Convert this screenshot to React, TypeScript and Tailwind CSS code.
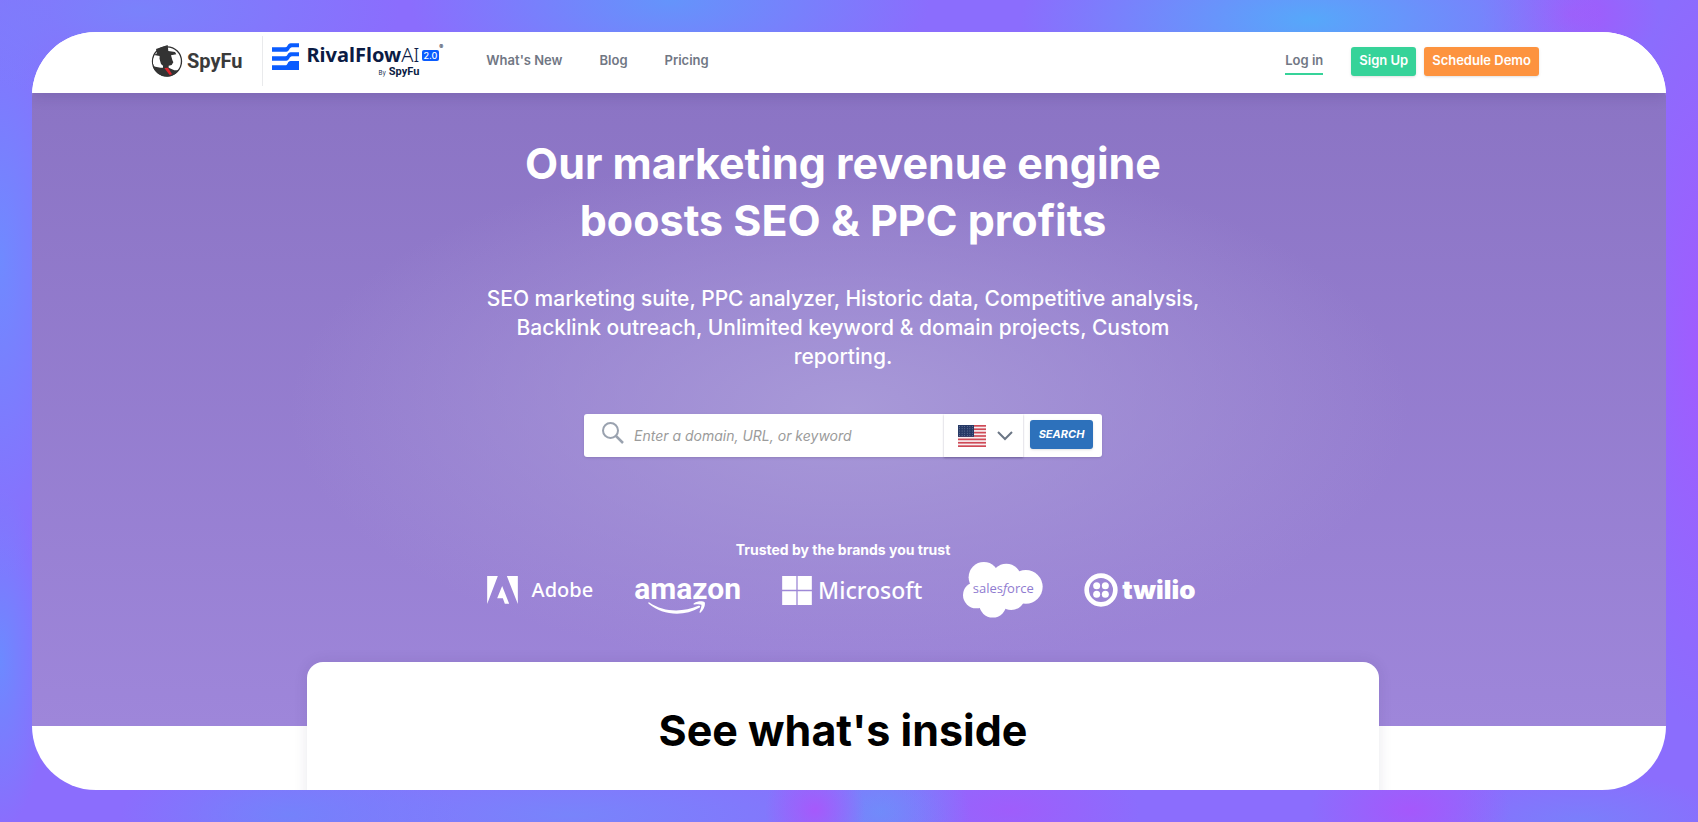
import React from "react";

function SpyFuMark() {
  return (
    <svg viewBox="0 0 96 96" className="size-8" aria-hidden="true">
      <circle cx="48" cy="49" r="43.500" fill="#fff" stroke="#333" strokeWidth="4" />
      <path
        fill="#333"
        d="M15 12 50 0 52 18 72 21 76 28 60 31 64 45 67 52 62 60 53 62 53 68 70 76 84 76C74 90 61 96 48 95 27 95 9 80 5 62 16 66 26 68 36 68L36 62 30 57 25 40 26 33 9 30 18 25Z"
      />
      <path fill="#fff" d="M12 34 25 36 24 48 29 60 35 64 35 66 22 63C14 60 8 58 6 56 5 47 8 40 12 34Z" />
      <path fill="#d9232b" d="M40 69 51 68 63 88 56 90Z" />
    </svg>
  );
}

function RivalFlowMark() {
  return (
    <svg viewBox="0 0 81 81" className="size-[27px]" fill="#0a5cff" aria-hidden="true">
      <path d="M0 13H40C48 13 46 1 56 1H81V13H60C52 13 52 26 43 26H0Z" />
      <path d="M0 40H40C48 40 46 28 56 28H81V40H60C52 40 52 53 43 53H0Z" />
      <path d="M0 67H40C48 67 46 54 56 54H81V81H0Z" />
    </svg>
  );
}

function UsFlag() {
  const stripes = [0, 1, 2, 3, 4, 5, 6];
  const rows = [0, 1, 2, 3, 4];
  const cols = [0, 1, 2, 3, 4, 5];
  return (
    <svg viewBox="0 0 56 44" className="h-[22px] w-7 shrink-0" aria-hidden="true">
      <rect width="56" height="44" fill="#f7eff1" />
      {stripes.map((i) => (
        <rect key={i} y={i * 6.77} width="56" height="3.380" fill="#cf4a56" />
      ))}
      <rect width="32" height="23.700" fill="#273a66" />
      {rows.map((r) =>
        cols.map((c) => <circle key={`${r}-${c}`} cx={3 + c * 5.2} cy={3 + r * 4.5} r="0.9" fill="#93a0bd" />)
      )}
    </svg>
  );
}

function AdobeLogo() {
  return (
    <div className="flex items-center gap-[14px]">
      <svg viewBox="0 0 92 84" className="h-7 w-[31px]" fill="#fff" aria-hidden="true">
        <path d="M0 0H32L0 84ZM59 0H92V84ZM45 30 66 83H53L47 67H30Z" />
      </svg>
      <span className="font-['Noto_Sans','Open_Sans',sans-serif] text-[20px] leading-7 font-medium">Adobe</span>
    </div>
  );
}

function AmazonLogo() {
  return (
    <div className="flex flex-col items-start pt-2">
      <span className="font-[Roboto,sans-serif] text-[30px] leading-7 font-bold">amazon</span>
      <svg viewBox="0 0 174 38" className="-mt-[2px] ml-[14px] h-[13px] w-[58px]" fill="#fff" aria-hidden="true">
        <path d="M4 4C48 34 104 34 151 14 156 12 159 17 154 20 108 47 43 43 2 8 0 5 1 2 4 4Z" />
        <path d="M138 6C149-1 164-1 170 3 173 10 168 26 158 34 155 36 154 34 155 31 159 22 161 14 160 11 156 8 147 9 140 10 136 10 135 8 138 6Z" />
      </svg>
    </div>
  );
}

function MicrosoftLogo() {
  return (
    <div className="flex items-center gap-[6px]">
      <svg viewBox="0 0 90 88" className="h-[29px] w-[30px]" fill="#fff" aria-hidden="true">
        <path d="M0 0H43V42H0ZM47 0H90V42H47ZM0 46H43V88H0ZM47 46H90V88H47Z" />
      </svg>
      <span className="font-['Noto_Sans','Open_Sans',sans-serif] text-[23px] leading-8 font-medium">Microsoft</span>
    </div>
  );
}

function SalesforceLogo() {
  return (
    <div className="grid place-items-center">
      <svg viewBox="369 96 242 169" className="col-start-1 row-start-1 h-14 w-20" fill="#fff" aria-hidden="true">
        <circle cx="432" cy="142" r="46" />
        <circle cx="500" cy="146" r="45" />
        <circle cx="559" cy="171" r="51" />
        <circle cx="409" cy="196" r="40" />
        <circle cx="459" cy="223" r="41" />
        <circle cx="515" cy="199" r="42" />
        <rect x="410" y="140" width="130" height="80" />
      </svg>
      <span className="col-start-1 row-start-1 pb-1 font-['Open_Sans','Noto_Sans',sans-serif] text-[13px] leading-4 text-[#8f7bd0]">
        sales<i>f</i>orce
      </span>
    </div>
  );
}

function TwilioLogo() {
  return (
    <div className="flex items-center gap-1">
      <svg viewBox="0 0 102 102" className="size-[34px]" fill="#fff" aria-hidden="true">
        <circle cx="51" cy="51" r="43" fill="none" stroke="#fff" strokeWidth="14" />
        <circle cx="38" cy="38" r="10.500" />
        <circle cx="64" cy="38" r="10.500" />
        <circle cx="38" cy="64" r="10.500" />
        <circle cx="64" cy="64" r="10.500" />
      </svg>
      <span className="text-[26px] leading-8 font-black">twilio</span>
    </div>
  );
}

function Header() {
  return (
    <header className="relative z-10 bg-white pr-2 shadow-[0_2px_14px_rgba(40,25,80,0.18)]">
      <div className="mx-auto flex h-[61px] max-w-[1388px] items-center pb-[3px] text-[13px] font-semibold text-[#717784]">
        <a href="#spyfu" className="flex items-center gap-1">
          <SpyFuMark />
          <span className="font-[Roboto,sans-serif] text-[20px] leading-8 font-bold text-[#3a3a3a]">SpyFu</span>
        </a>
        <a href="#rivalflow" className="ml-[19px] flex h-[50px] items-start gap-2 border-l border-[#e9eaec] pt-[7px] pl-[9px]">
          <RivalFlowMark />
          <span className="flex flex-col items-start text-[#0b1b44]">
            <span className="flex items-center">
              <span className="font-['Noto_Sans',sans-serif] text-[20px] leading-6 font-bold">RivalFlow</span>
              <span className="font-['Noto_Sans',sans-serif] text-[20px] leading-6 font-light">AI</span>
              <span className="ml-[2px] rounded-[2px] bg-[#0a5cff] px-[2px] text-[9px] leading-[11px] font-medium text-white">2.0</span>
              <span className="self-start text-[6px] leading-[8px]">®</span>
            </span>
            <span className="flex items-baseline gap-[3px] self-end pr-6 leading-[10px]">
              <span className="text-[6px] font-normal">By</span>
              <span className="font-[Roboto,sans-serif] text-[11px] font-bold">SpyFu</span>
            </span>
          </span>
        </a>
        <nav className="ml-[43px] flex gap-[37px]">
          <a href="#new">What's New</a>
          <a href="#blog">Blog</a>
          <a href="#pricing">Pricing</a>
        </nav>
        <div className="ml-auto flex items-center gap-2">
          <a href="#login" className="mr-5 border-b-2 border-[#36d399] pt-1 pb-[3px]">
            Log in
          </a>
          <button type="button" className="h-[29px] rounded-[3px] bg-[#36d399] px-2 text-white shadow-sm">
            Sign Up
          </button>
          <button type="button" className="h-[29px] rounded-[3px] bg-[#fd933f] px-2 text-white shadow-sm">
            Schedule Demo
          </button>
        </div>
      </div>
    </header>
  );
}

function SearchBar() {
  return (
    <form
      className="mt-[43px] flex h-[43px] w-full max-w-[518px] items-stretch rounded-[3px] bg-white shadow-sm"
      onSubmit={(e: React.FormEvent) => e.preventDefault()}
    >
      <label htmlFor="query" className="flex items-start pt-2 pl-[18px]" aria-label="Search">
        <svg viewBox="0 0 22 22" className="size-[22px]" fill="none" stroke="#9aa2af" strokeWidth="2" aria-hidden="true">
          <circle cx="8.500" cy="8.500" r="7.500" />
          <path d="M14 14 21 21" strokeWidth="2.500" />
        </svg>
      </label>
      <input
        id="query"
        type="text"
        placeholder="Enter a domain, URL, or keyword"
        className="min-w-0 flex-1 bg-transparent pl-[10px] text-[14px] italic outline-none placeholder:text-[#9b9b9b]"
      />
      <label className="relative flex w-[79px] items-center justify-center gap-[11px] bg-white pl-1 shadow-[0_1px_2px_rgba(30,20,70,0.3)]">
        <UsFlag />
        <svg viewBox="0 0 16 10" className="h-[10px] w-4" fill="none" stroke="#6b7685" strokeWidth="2" aria-hidden="true">
          <path d="M1 1 8 8 15 1" />
        </svg>
        <select aria-label="Country" className="absolute inset-0 opacity-0">
          <option>US</option>
          <option>UK</option>
        </select>
      </label>
      <button
        type="submit"
        className="mt-[6px] mr-[9px] ml-[7px] h-[29px] w-[63px] rounded-[3px] bg-[#2d71bb] text-[11px] font-bold text-white italic shadow-sm"
      >
        SEARCH
      </button>
    </form>
  );
}

export default function App() {
  return (
    <div className="h-screen overflow-hidden bg-[#8b6dfd] bg-[radial-gradient(ellipse_260px_90px_at_140px_10px,#7a82fb,transparent),radial-gradient(ellipse_80px_320px_at_0px_260px,#6f8aff,transparent),radial-gradient(ellipse_50px_170px_at_0px_660px,#6c8aff,transparent),radial-gradient(ellipse_260px_110px_at_670px_0px,#6494fb,transparent),radial-gradient(ellipse_290px_110px_at_1310px_20px,#56a8fa,transparent),radial-gradient(ellipse_90px_60px_at_1570px_15px,#a459fb,transparent),radial-gradient(ellipse_80px_380px_at_1698px_350px,#a05cfe,transparent),radial-gradient(ellipse_170px_60px_at_290px_815px,#7482fb,transparent),radial-gradient(ellipse_50px_50px_at_815px_810px,#a659fb,transparent),radial-gradient(ellipse_380px_70px_at_570px_815px,#7884fb,transparent),radial-gradient(ellipse_90px_70px_at_880px_812px,#6f8cfa,transparent),radial-gradient(ellipse_130px_60px_at_1010px_810px,#9f5dfb,transparent),radial-gradient(ellipse_100px_60px_at_1410px_810px,#a558fb,transparent),radial-gradient(ellipse_150px_50px_at_1580px_822px,#7a7ffb,transparent)] p-8 font-[Inter,sans-serif]">
      <div className="h-full overflow-hidden rounded-[64px] bg-white">
        <Header />
        <main>
          <section className="flex flex-col items-center bg-[radial-gradient(ellipse_560px_260px_at_50%_50%,#a899d8,transparent),linear-gradient(#8b74c4,#9e86da)] px-6 pt-[42px] pr-9 pb-[108px] text-white">
            <h1 className="max-w-[660px] text-center text-[43px] leading-[57px] font-bold">
              Our marketing revenue engine boosts SEO &amp; PPC profits
            </h1>
            <p className="mt-[35px] max-w-[740px] text-center text-[21px] leading-[29px] font-medium">
              SEO marketing suite, PPC analyzer, Historic data, Competitive analysis, Backlink outreach, Unlimited keyword &amp;
              domain projects, Custom reporting.
            </p>
            <SearchBar />
            <h2 className="mt-[83px] text-[14px] leading-5 font-bold">Trusted by the brands you trust</h2>
            <div className="mt-[2px] flex h-14 items-center gap-[41px] pr-1">
              <AdobeLogo />
              <AmazonLogo />
              <MicrosoftLogo />
              <SalesforceLogo />
              <TwilioLogo />
            </div>
          </section>
          <div className="-mt-16 pr-3">
            <section className="mx-auto max-w-[1072px] rounded-[16px] bg-white pt-10 pb-24 text-center shadow-[0_0_14px_rgba(40,30,80,0.10)]">
              <h2 className="text-[43px] leading-[57px] font-bold text-black">See what's inside</h2>
            </section>
          </div>
        </main>
      </div>
    </div>
  );
}
